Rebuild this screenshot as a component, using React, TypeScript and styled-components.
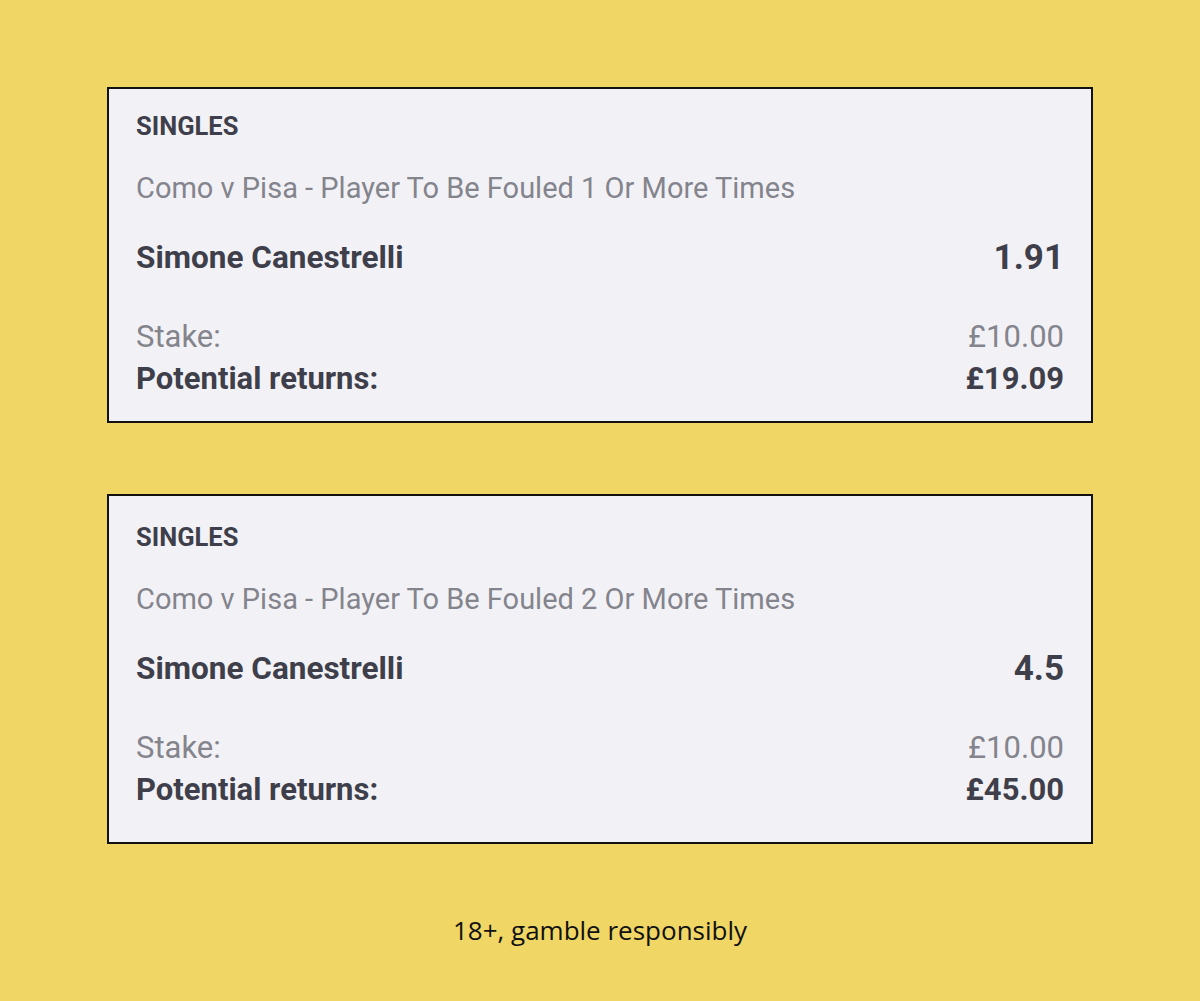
import React from "react";
import styled, { createGlobalStyle } from "styled-components";

const GlobalStyle = createGlobalStyle`
  html, body {
    margin: 0;
    padding: 0;
    background: #f0d664;
  }
`;

type Bet = {
  market: string;
  selection: string;
  odds: string;
  stake: string;
  returns: string;
  padTop: number;
  padBottom: number;
};

const bets: Bet[] = [
  {
    market: "Como v Pisa - Player To Be Fouled 1 Or More Times",
    selection: "Simone Canestrelli",
    odds: "1.91",
    stake: "£10.00",
    returns: "£19.09",
    padTop: 22,
    padBottom: 24,
  },
  {
    market: "Como v Pisa - Player To Be Fouled 2 Or More Times",
    selection: "Simone Canestrelli",
    odds: "4.5",
    stake: "£10.00",
    returns: "£45.00",
    padTop: 26,
    padBottom: 34,
  },
];

function App() {
  return (
    <>
      <GlobalStyle />
      <Page>
        <Slips>
          {bets.map((bet, index) => (
            <Card key={index} $padTop={bet.padTop} $padBottom={bet.padBottom}>
              <Heading>SINGLES</Heading>
              <Market>{bet.market}</Market>
              <SelectionRow>
                <Selection>{bet.selection}</Selection>
                <Odds>{bet.odds}</Odds>
              </SelectionRow>
              <Totals>
                <TotalRow>
                  <Label>Stake:</Label>
                  <Label>{bet.stake}</Label>
                </TotalRow>
                <TotalRow>
                  <Label $bold>Potential returns:</Label>
                  <Label $bold>{bet.returns}</Label>
                </TotalRow>
              </Totals>
            </Card>
          ))}
        </Slips>
        <Footer>18+, gamble responsibly</Footer>
      </Page>
    </>
  );
}

export default App;

const Page = styled.div`
  width: 1200px;
  height: 1001px;
  box-sizing: border-box;
  padding: 87px 107px 0;
  display: flex;
  flex-direction: column;
  font-family: Roboto, "Liberation Sans", sans-serif;
`;

const Slips = styled.div`
  display: flex;
  flex-direction: column;
  gap: 71px;
`;

const Card = styled.div<{ $padTop: number; $padBottom: number }>`
  background: #f2f2f6;
  border: 2px solid #111;
  padding: ${(p) => p.$padTop}px 27px ${(p) => p.$padBottom}px 27px;
  display: flex;
  flex-direction: column;
  color: #3e3f4a;
`;

const Heading = styled.div`
  font-size: 25.5px;
  font-weight: 700;
  line-height: 30px;
`;

const Market = styled.div`
  margin-top: 30px;
  font-size: 29px;
  line-height: 34px;
  color: #84848d;
`;

const SelectionRow = styled.div`
  margin-top: 33px;
  height: 40px;
  display: flex;
  justify-content: space-between;
  align-items: center;
`;

const Selection = styled.div`
  font-size: 31.5px;
  font-weight: 700;
  line-height: 40px;
`;

const Odds = styled.div`
  font-size: 35px;
  font-weight: 700;
  line-height: 40px;
`;

const Totals = styled.div`
  margin-top: 41px;
  display: flex;
  flex-direction: column;
  gap: 6px;
`;

const TotalRow = styled.div`
  display: flex;
  justify-content: space-between;
  align-items: center;
`;

const Label = styled.div<{ $bold?: boolean }>`
  font-size: 31px;
  line-height: 36px;
  font-weight: ${(p) => (p.$bold ? 700 : 400)};
  color: ${(p) => (p.$bold ? "#3e3f4a" : "#84848d")};
`;

const Footer = styled.div`
  margin-top: 70px;
  text-align: center;
  font-family: "Open Sans", sans-serif;
  font-size: 26px;
  line-height: 32px;
  color: #111;
`;
